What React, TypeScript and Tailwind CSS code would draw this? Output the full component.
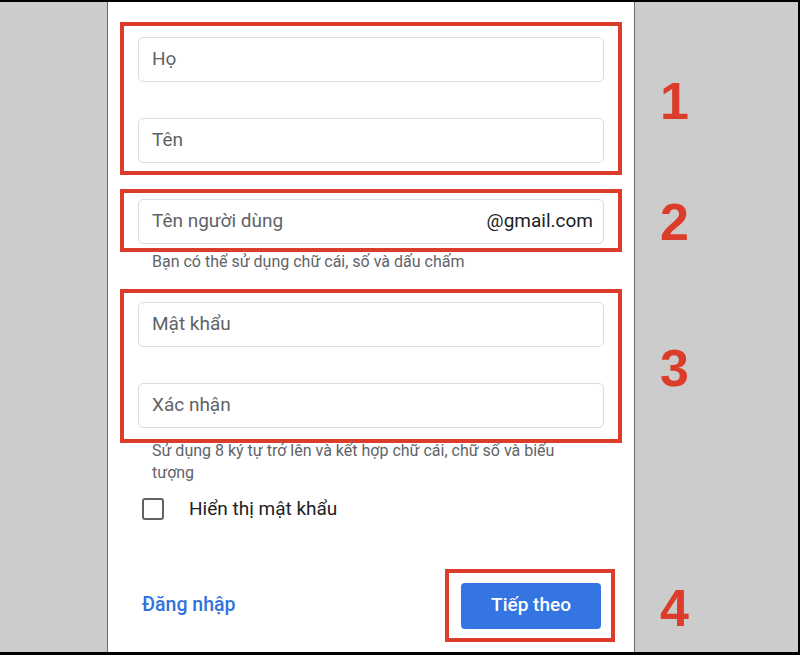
import React from 'react';

const Field: React.FC<{ label: string; suffix?: string }> = ({ label, suffix }) => (
  <div className="flex h-[45px] items-center justify-between rounded-[5px] border border-[#dadce0] bg-white pl-[13px] pr-[10px]">
    <span className="text-[19px] text-[#5f6368]">{label}</span>
    {suffix && <span className="text-[19px] text-[#202124]">{suffix}</span>}
  </div>
);

const App: React.FC = () => {
  return (
    <div className="h-[655px] w-[800px] bg-black pt-[2px] pr-[2px] pb-[3px] font-['Roboto','Liberation_Sans',sans-serif]">
      <div className="flex h-full">
        {/* left gray panel */}
        <div className="w-[108px] border-r border-[#6b6b6b] bg-[#cccccc]" />

        {/* form */}
        <div className="flex w-[527px] flex-col border-r border-[#6b6b6b] bg-white pt-[20px]">
          <div className="ml-[12px] w-[502px] border-4 border-[#dc3d2a] px-[14px] pt-[11px] pb-[8px]">
            <div className="flex flex-col gap-[36px]">
              <Field label="Họ" />
              <Field label="Tên" />
            </div>
          </div>

          <div className="mt-[14px] ml-[12px] w-[502px] border-4 border-[#dc3d2a] px-[14px] pt-[6px] pb-[4px]">
            <Field label="Tên người dùng" suffix="@gmail.com" />
          </div>
          <p className="pl-[44px] text-[16px] leading-[20px] text-[#5f6368]">
            Bạn có thể sử dụng chữ cái, số và dấu chấm
          </p>

          <div className="mt-[17px] ml-[12px] w-[502px] border-4 border-[#dc3d2a] px-[14px] pt-[9px] pb-[11px]">
            <div className="flex flex-col gap-[36px]">
              <Field label="Mật khẩu" />
              <Field label="Xác nhận" />
            </div>
          </div>
          <p className="-mt-[3px] w-[476px] pl-[44px] text-[16px] leading-[22px] text-[#5f6368]">
            Sử dụng 8 ký tự trở lên và kết hợp chữ cái, chữ số và biểu tượng
          </p>

          <div className="mt-[11px] flex items-center pl-[34px]">
            <div className="h-[22px] w-[22px] rounded-[3px] border-2 border-[#5f6368]" />
            <span className="ml-[25px] text-[19px] text-[#202124]">Hiển thị mật khẩu</span>
          </div>

          <div className="mt-[45px] flex items-center justify-between pr-[19px] pl-[34px]">
            <span className="text-[19.5px] font-medium text-[#2f72e0]">Đăng nhập</span>
            <div className="w-[170px] border-4 border-[#dc3d2a] pt-[10px] pr-[10px] pb-[9px] pl-[12px]">
              <button className="flex h-[46px] w-[140px] items-center justify-center rounded-[4px] bg-[#3574e3] text-[19px] font-medium text-white">
                Tiếp theo
              </button>
            </div>
          </div>
        </div>

        {/* right gray panel with step numbers */}
        <div className="flex flex-1 flex-col bg-[#cccccc] pt-[73px] pl-[25px] font-['Liberation_Sans',Arial,sans-serif] text-[52px] leading-none font-bold text-[#dc3d2a]">
          <span className="h-[52px]">1</span>
          <span className="mt-[69px] h-[52px]">2</span>
          <span className="mt-[94px] h-[52px]">3</span>
          <span className="mt-[188px] h-[52px]">4</span>
        </div>
      </div>
    </div>
  );
};

export default App;
